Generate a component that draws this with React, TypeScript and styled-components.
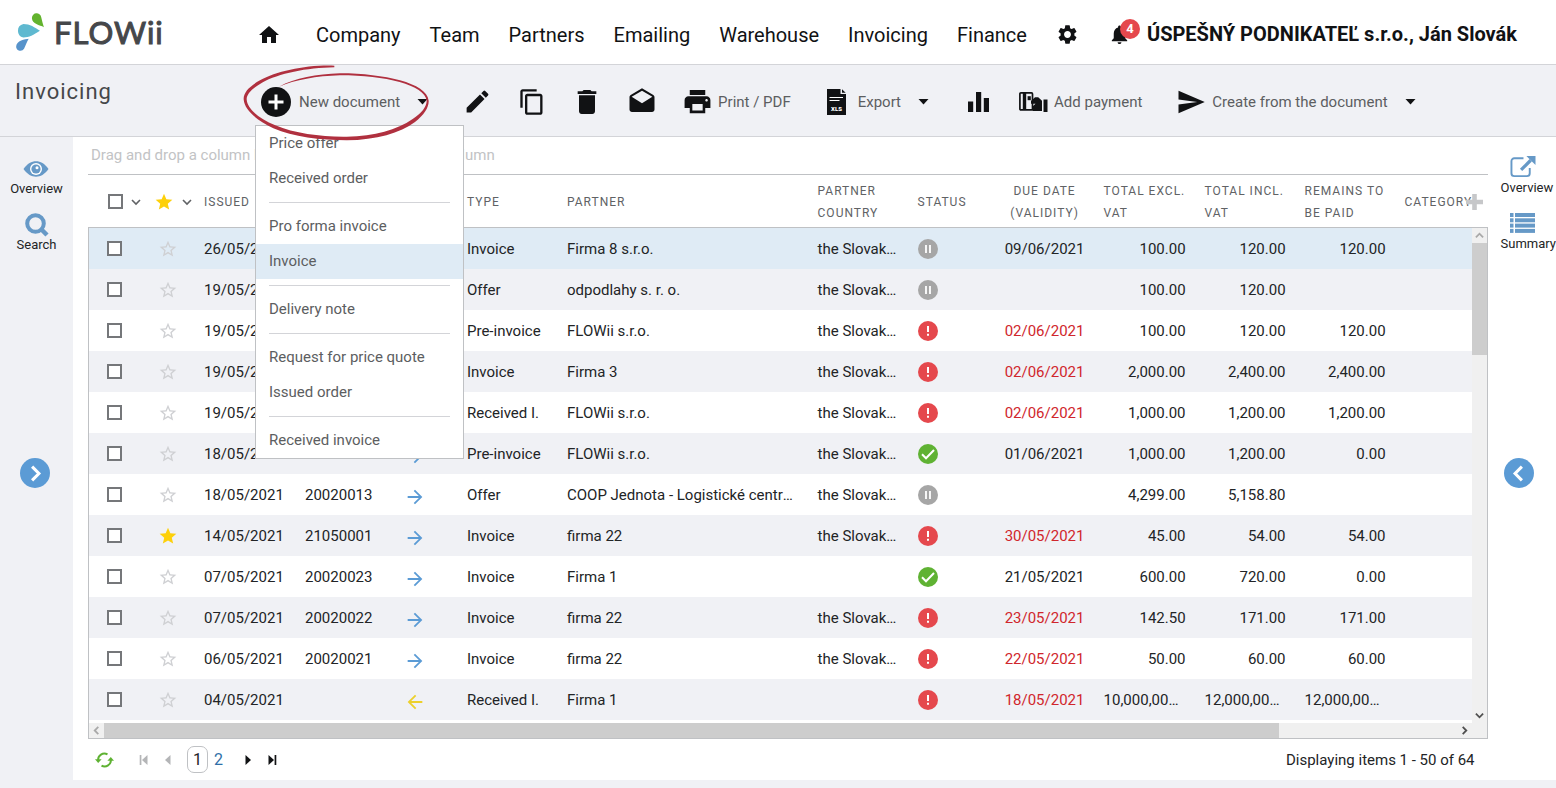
import React from 'react';
import styled, { createGlobalStyle, css } from 'styled-components';
import {
  MdHome,
  MdSettings,
  MdNotifications,
  MdEdit,
  MdContentCopy,
  MdDelete,
  MdDrafts,
  MdPrint,
  MdSend,
  MdStar,
  MdStarBorder,
  MdArrowForward,
  MdArrowBack,
} from 'react-icons/md';

const color = {
  ink: '#111214',
  text: '#222426',
  muted: '#5c5e61',
  page: '#f0f1f5',
  line: '#d3d4d8',
  frame: '#bfc1c4',
  select: '#dfebf5',
  blue: '#5b9bd5',
  steel: '#6699c7',
  red: '#e5484d',
  due: '#d0262c',
  green: '#5fb233',
  grey: '#a6a6a6',
  gold: '#fdd00a',
};

const GlobalStyle = createGlobalStyle`
  *, *::before, *::after { box-sizing: border-box; }
  body {
    margin: 0;
    background: ${color.page};
    color: ${color.text};
    font-family: Roboto, "Liberation Sans", sans-serif;
    font-size: 15px;
  }
  button {
    font: inherit;
    color: inherit;
    background: none;
    border: 0;
    padding: 0;
    cursor: pointer;
  }
  a { color: inherit; text-decoration: none; }
  svg { display: block; flex: none; }
`;

const Page = styled.div`
  display: flex;
  flex-direction: column;
  min-height: 100vh;
`;

/* ---------- top navigation ---------- */

const Header = styled.header`
  display: flex;
  align-items: center;
  height: 65px;
  padding-left: 15px;
  background: #fff;
  border-bottom: 1px solid ${color.line};
`;

const Logo = styled.a`
  display: flex;
  align-items: center;
  gap: 9px;
  flex: 0 0 242px;
  height: 60px;
  color: #45474a;
  font-family: Lato, Roboto, sans-serif;
  font-size: 31px;
  letter-spacing: 1px;
  -webkit-text-stroke: 1px #45474a;
`;

const Nav = styled.nav`
  display: flex;
  align-items: center;
  gap: 29px;
  padding-top: 5px;
  color: ${color.ink};
  font-size: 20px;
  line-height: 24px;
  white-space: nowrap;
`;

const HomeLink = styled.a`
  margin-right: 6px;
`;

const Account = styled.div`
  display: flex;
  align-items: center;
  gap: 16px;
  margin-left: 29px;
  padding-top: 4px;
  color: ${color.ink};
  font-size: 20px;
  line-height: 24px;
  font-weight: 700;
  white-space: nowrap;
`;

const Bell = styled.button`
  position: relative;
`;

const Count = styled.span`
  position: absolute;
  left: 12px;
  top: -4px;
  width: 20px;
  height: 20px;
  border-radius: 50%;
  background: ${color.red};
  color: #fff;
  font-size: 13px;
  line-height: 20px;
  font-weight: 700;
  text-align: center;
`;

/* ---------- toolbar ---------- */

const Toolbar = styled.div`
  display: flex;
  height: 72px;
  padding-left: 15px;
  background: ${color.page};
  border-bottom: 1px solid ${color.line};
`;

const Title = styled.h1`
  flex: 0 0 246px;
  margin: 0;
  padding-top: 14px;
  color: #45474a;
  font-size: 22px;
  line-height: 26px;
  font-weight: 400;
  letter-spacing: 1px;
`;

const Tools = styled.div`
  display: flex;
  align-items: center;
  gap: 29px;
  padding-top: 2px;
`;

const Tool = styled.button<{ $pad?: number }>`
  display: flex;
  align-items: center;
  gap: 8px;
  height: 30px;
  padding-right: ${(p) => p.$pad ?? 0}px;
  color: ${color.muted};
  line-height: 20px;
  white-space: nowrap;
`;

const ToolIcon = styled.span`
  display: flex;
  align-items: center;
  justify-content: center;
  width: 26px;
  color: ${color.ink};
`;

const CaretBox = styled.span`
  margin-left: 9px;
  color: ${color.ink};
`;

const MenuAnchor = styled.div`
  position: relative;
`;

const Menu = styled.ul`
  position: absolute;
  z-index: 2;
  left: -6px;
  top: 38px;
  width: 209px;
  margin: 0;
  padding: 0;
  list-style: none;
  background: #fff;
  border: 1px solid ${color.frame};
`;

const MenuItem = styled.button<{ $active?: boolean }>`
  display: block;
  width: 100%;
  padding: 0 13px;
  color: ${color.muted};
  background: ${(p) => (p.$active ? color.select : 'transparent')};
  line-height: 35px;
  text-align: left;
`;

const MenuLine = styled.li`
  height: 1px;
  margin: 6px 13px;
  background: ${color.line};
`;

const Marker = styled.svg`
  position: absolute;
  z-index: 3;
  left: -21px;
  top: -27px;
  pointer-events: none;
`;

/* ---------- body ---------- */

const Body = styled.div`
  display: flex;
  margin-bottom: 8px;
`;

const LeftRail = styled.aside`
  display: flex;
  flex-direction: column;
  align-items: center;
  flex: 0 0 73px;
  padding-top: 20px;
`;

const RightRail = styled.aside`
  display: flex;
  flex-direction: column;
  align-items: flex-start;
  flex: 0 0 67px;
  padding: 19px 0 0 13px;
  background: #fff;
`;

const RailItem = styled.button<{ $side: 'left' | 'right' }>`
  display: flex;
  flex-direction: column;
  align-items: ${(p) => (p.$side === 'left' ? 'center' : 'flex-start')};
  justify-content: flex-end;
  height: 40px;
  margin-bottom: 16px;
  color: ${color.text};
  font-size: 13px;
  line-height: 16px;
`;

const RailIcon = styled.span<{ $side: 'left' | 'right' }>`
  display: flex;
  align-items: center;
  justify-content: center;
  width: 26px;
  height: 24px;
  margin-left: ${(p) => (p.$side === 'left' ? 0 : 9)}px;
  margin-bottom: ${(p) => (p.$side === 'left' ? 0 : 2)}px;
`;

const RailToggle = styled.button<{ $side: 'left' | 'right' }>`
  display: flex;
  align-items: center;
  justify-content: center;
  width: 30px;
  height: 30px;
  margin-top: ${(p) => (p.$side === 'left' ? 189 : 190)}px;
  margin-right: ${(p) => (p.$side === 'left' ? 3 : 0)}px;
  margin-left: ${(p) => (p.$side === 'left' ? 0 : 3)}px;
  border-radius: 50%;
  background: ${color.blue};
  color: #fff;
`;

const Main = styled.main`
  flex: 1;
  min-width: 0;
  padding-left: 15px;
  background: #fff;
`;

const GroupBar = styled.div`
  height: 38px;
  padding: 0 3px;
  border-bottom: 1px solid ${color.frame};
  color: #c2c3c5;
  line-height: 36px;
`;

const HeadWrap = styled.div`
  position: relative;
  padding: 0 16px 0 1px;
`;

const AddColumn = styled.button`
  position: absolute;
  right: 5px;
  top: 19px;
`;

const Table = styled.table`
  width: 100%;
  table-layout: fixed;
  border-collapse: collapse;
`;

const BodyTable = styled(Table)`
  margin-bottom: 3px;
`;

const Th = styled.th<{ $align?: string }>`
  height: 52px;
  padding: 1px 0 0 9px;
  color: #606265;
  font-size: 12px;
  line-height: 22px;
  font-weight: 400;
  letter-spacing: 1px;
  text-transform: uppercase;
  text-align: ${(p) => p.$align ?? 'left'};
  ${(p) =>
    p.$align === 'center' &&
    css`
      padding: 1px 8px 0;
    `}
`;

const PickCell = styled.span`
  display: flex;
  align-items: center;
  gap: 8px;
  padding-left: 10px;
`;

const StarCell = styled.span`
  display: flex;
  align-items: center;
  gap: 8px;
  margin-left: -4px;
`;

const Frame = styled.div`
  display: grid;
  grid-template-columns: minmax(0, 1fr) 15px;
  border: 1px solid ${color.frame};
`;

const Row = styled.tr<{ $selected?: boolean }>`
  background: #fff;
  &:nth-child(even) {
    background: ${color.page};
  }
  ${(p) =>
    p.$selected &&
    css`
      background: ${color.select};
    `}
`;

const Td = styled.td<{ $align?: string; $late?: boolean }>`
  height: 41px;
  padding: 0 9px;
  overflow: hidden;
  color: ${(p) => (p.$late ? color.due : color.text)};
  line-height: 20px;
  text-align: ${(p) => p.$align ?? 'left'};
  text-overflow: ellipsis;
  white-space: nowrap;
`;

const Amount = styled(Td)`
  padding-right: 10px;
`;

const Direction = styled.span`
  display: block;
  padding-top: 5px;
`;

const Check = styled.input`
  appearance: none;
  display: block;
  width: 15px;
  height: 15px;
  margin: 0 0 0 9px;
  border: 2px solid #75777a;
  background: #fff;
  flex: none;
`;

const HeadCheck = styled(Check)`
  margin: 0;
`;

const VScroll = styled.div`
  display: flex;
  flex-direction: column;
  background: #f0f0f0;
`;

const VThumb = styled.div`
  height: 112px;
  background: #cdcdcd;
`;

const HScroll = styled.div`
  display: flex;
  height: 15px;
  background: #f0f0f0;
`;

const HThumb = styled.div`
  flex: 0 1 85%;
  background: #cdcdcd;
`;

const ScrollButton = styled.button<{ $end?: boolean }>`
  display: flex;
  align-items: center;
  justify-content: center;
  flex: 0 0 15px;
  min-width: 15px;
  height: 15px;
  color: ${(p) => (p.$end ? '#505050' : '#a9a9a9')};
  ${(p) =>
    p.$end &&
    css`
      margin-top: auto;
      margin-left: auto;
    `}
`;

const Corner = styled.div`
  background: #f0f0f0;
`;

const Pager = styled.footer`
  display: flex;
  align-items: center;
  height: 41px;
  padding: 0 13px 0 7px;
`;

const PagerGroup = styled.div`
  display: flex;
  align-items: center;
  gap: 13px;
  margin-left: 25px;
`;

const Pages = styled.div`
  display: flex;
  align-items: center;
  gap: 6px;
  margin: 0 8px 0 2px;
`;

const PageLink = styled.a<{ $current?: boolean }>`
  color: #2f6fa8;
  ${(p) =>
    p.$current &&
    css`
      width: 21px;
      border: 1px solid ${color.frame};
      border-radius: 7px;
      color: ${color.text};
      text-align: center;
    `}
  font-size: 16px;
  line-height: 25px;
`;

const Summary = styled.span`
  margin-left: auto;
`;

/* ---------- drawings ---------- */

const Caret = () => (
  <svg width="11" height="6" viewBox="0 0 11 6" fill="currentColor">
    <path d="M0.5 0h10L5.5 5.6z" />
  </svg>
);

const chevrons = {
  down: 'M1 3l4 4 4-4',
  up: 'M1 7l4-4 4 4',
  left: 'M7 1L3 5l4 4',
  right: 'M3 1l4 4-4 4',
};

interface ChevronProps {
  to: keyof typeof chevrons;
  size?: number;
  weight?: number;
}

const Chevron = ({ to, size = 10, weight = 1.6 }: ChevronProps) => (
  <svg width={size} height={size} viewBox="0 0 10 10" fill="none" stroke="currentColor" strokeWidth={weight}>
    <path d={chevrons[to]} />
  </svg>
);

const LogoMark = () => (
  <svg width="30" height="39" viewBox="45 33 90 118">
    <path fill="#63b32e" d="M132 76C120 70 96 66 96 50A14 14 0 0 1 124 46C126 56 129 66 132 76Z" />
    <path fill="#5fb9d0" d="M120 87C100 100 88 107 70 107A21 21 0 0 1 70 66C90 66 104 76 120 87Z" />
    <path fill="#5793cb" d="M86 111C76 112 48 116 48 136A13 13 0 0 0 72 141C77 132 80 120 86 111Z" />
  </svg>
);

const PlusDisc = () => (
  <svg width="30" height="30" viewBox="0 0 30 30">
    <circle cx="15" cy="15" r="15" fill={color.ink} />
    <path d="M15 7.500v15M7.500 15h15" stroke="#fff" strokeWidth="3" />
  </svg>
);

const XlsIcon = () => (
  <svg width="19" height="26" viewBox="0 0 19 26">
    <path d="M0 0h13.500v5H19V26H0z" fill={color.ink} />
    <path d="M15 0.300l3.700 3.500H15z" fill={color.ink} />
    <path d="M2.500 8.500h13.500M2.500 11.500h10" stroke="#fff" strokeWidth="1.200" />
    <text x="9.500" y="21.500" fill="#fff" fontFamily="Roboto, sans-serif" fontSize="6" fontWeight="900" textAnchor="middle">
      XLS
    </text>
  </svg>
);

const ChartIcon = () => (
  <svg width="21" height="20" viewBox="0 0 21 20" fill={color.ink}>
    <path d="M0 9.500h5.200V20H0zM8 0h5.200v20H8zM15.800 6h5.200v14h-5.200z" />
  </svg>
);

const PaymentIcon = () => (
  <svg width="29" height="20" viewBox="0 0 29 20" fill={color.ink}>
    <rect x="0.900" y="0.900" width="12.600" height="17" rx="1" fill="none" stroke={color.ink} strokeWidth="1.700" />
    <path d="M3.800 1h3.400v17H3.800z" />
    <path d="M8.600 4.200h3.200v4H8.600z" />
    <path d="M12 9l4-3.800h3.200L23 8.800V19h-9.500v-4.500l3-2.700H12z" />
    <path d="M24.500 7.500h4V20h-4z" />
  </svg>
);

const EyeIcon = () => (
  <svg width="26" height="16" viewBox="0 0 26 16">
    <path d="M0.500 8C4.500 2.500 8.500 0.300 13 0.300S21.500 2.500 25.500 8C21.500 13.500 17.500 15.700 13 15.700S4.500 13.500 0.500 8z" fill={color.steel} />
    <circle cx="13" cy="8" r="6" fill="#fff" />
    <circle cx="13" cy="8" r="4.600" fill={color.steel} />
    <circle cx="14" cy="6.800" r="1.500" fill="#fff" />
  </svg>
);

const SearchIcon = () => (
  <svg width="24" height="24" viewBox="0 0 24 24" fill="none" stroke={color.steel}>
    <circle cx="10.500" cy="10.500" r="8.300" strokeWidth="4" />
    <path d="M16.500 16.500L22 22" strokeWidth="4.500" />
  </svg>
);

const OpenIcon = () => (
  <svg width="26" height="23" viewBox="0 0 27 23" fill="none" stroke={color.steel}>
    <path d="M14 3H4.500A3 3 0 0 0 1.500 6V18.500A3 3 0 0 0 4.500 21.500H17.500A3 3 0 0 0 20.500 18.500V13" strokeWidth="2" />
    <path d="M11.500 15L21.500 5" strokeWidth="3.400" />
    <path d="M17 0.500H26.500V10z" fill={color.steel} stroke="none" />
  </svg>
);

const ListIcon = () => (
  <svg width="25" height="20" viewBox="0 0 25 20" fill={color.steel}>
    {[0, 5.3, 10.6, 15.9].map((y) => (
      <React.Fragment key={y}>
        <rect x="0" y={y} width="3.500" height="4" />
        <rect x="5" y={y} width="20" height="4" />
      </React.Fragment>
    ))}
  </svg>
);

const AddIcon = () => (
  <svg width="17" height="16" viewBox="0 0 17 16" fill="#c6c7c9">
    <path d="M6.200 0h4.600v5.700H17v4.600h-6.200V16H6.200v-5.700H0V5.700h6.200z" />
  </svg>
);

const RefreshIcon = () => (
  <svg width="19" height="16" viewBox="0 0 19 16" fill="none" stroke={color.green} strokeWidth="2">
    <path d="M3.200 8.500A6.200 6.200 0 0 1 12.500 2.400" />
    <path d="M15.800 7.500A6.200 6.200 0 0 1 6.500 13.600" />
    <path d="M0 7.300h6.600L3.200 11z" fill={color.green} stroke="none" />
    <path d="M12.400 8.700H19L15.800 5z" fill={color.green} stroke="none" />
  </svg>
);

const StepIcon = ({ back, edge }: { back?: boolean; edge?: boolean }) => (
  <svg width="10" height="10" viewBox="0 0 10 10" fill={back ? '#b4b5b7' : color.ink}>
    <g transform={back ? 'translate(10 0) scale(-1 1)' : undefined}>
      <path d="M1.500 0L7 5l-5.500 5z" />
      {edge && <path d="M7.600 0h1.700v10H7.600z" />}
    </g>
  </svg>
);

type Status = 'wait' | 'late' | 'done';

const StatusIcon = ({ status }: { status: Status }) => {
  const fill = { wait: color.grey, late: color.red, done: color.green }[status];
  return (
    <svg width="20" height="20" viewBox="0 0 20 20" role="img" aria-label={status}>
      <circle cx="10" cy="10" r="10" fill={fill} />
      {status === 'wait' && <path d="M8 6v8M12 6v8" stroke="#fff" strokeWidth="1.800" />}
      {status === 'late' && <path d="M10 5v6M10 12.800v2" stroke="#fff" strokeWidth="2" />}
      {status === 'done' && <path d="M4 10.300l4 4 8-8.300" stroke="#fff" strokeWidth="2" fill="none" />}
    </svg>
  );
};

const RedLoop = () => (
  <Marker width="200" height="90" viewBox="0 0 600 270" fill="#b0303f">
    <path d="M283 17C200 14 110 33 60 61C28 79 10 98 11 118C13 150 50 181 100 205C160 231 240 241 320 241C410 240 480 219 525 186C552 165 567 142 566 122C563 95 530 75 480 61C430 48 370 40 300 40C230 42 165 54 117 80C165 60 230 48 300 46C370 46 430 53 479 66C526 80 557 98 560 122C560 140 545 159 518 177C470 210 405 228 320 230C245 231 165 221 106 196C54 174 21 145 20 118C20 102 36 85 66 68C116 41 200 23 283 22Z" />
  </Marker>
);

/* ---------- data ---------- */

interface Doc {
  issued: string;
  number?: string;
  dir?: 'out' | 'in';
  star?: boolean;
  type: string;
  partner: string;
  country?: string;
  status: Status;
  due?: string;
  excl: string;
  incl: string;
  remains?: string;
}

const SK = 'the Slovak Republic';

const docs: Doc[] = [
  { issued: '26/05/2021', type: 'Invoice', partner: 'Firma 8 s.r.o.', country: SK, status: 'wait', due: '09/06/2021', excl: '100.00', incl: '120.00', remains: '120.00' },
  { issued: '19/05/2021', type: 'Offer', partner: 'odpodlahy s. r. o.', country: SK, status: 'wait', excl: '100.00', incl: '120.00' },
  { issued: '19/05/2021', type: 'Pre-invoice', partner: 'FLOWii s.r.o.', country: SK, status: 'late', due: '02/06/2021', excl: '100.00', incl: '120.00', remains: '120.00' },
  { issued: '19/05/2021', type: 'Invoice', partner: 'Firma 3', country: SK, status: 'late', due: '02/06/2021', excl: '2,000.00', incl: '2,400.00', remains: '2,400.00' },
  { issued: '19/05/2021', type: 'Received I.', partner: 'FLOWii s.r.o.', country: SK, status: 'late', due: '02/06/2021', excl: '1,000.00', incl: '1,200.00', remains: '1,200.00' },
  { issued: '18/05/2021', number: '20020006', dir: 'out', type: 'Pre-invoice', partner: 'FLOWii s.r.o.', country: SK, status: 'done', due: '01/06/2021', excl: '1,000.00', incl: '1,200.00', remains: '0.00' },
  { issued: '18/05/2021', number: '20020013', dir: 'out', type: 'Offer', partner: 'COOP Jednota - Logistické centrum', country: SK, status: 'wait', excl: '4,299.00', incl: '5,158.80' },
  { issued: '14/05/2021', number: '21050001', dir: 'out', star: true, type: 'Invoice', partner: 'firma 22', country: SK, status: 'late', due: '30/05/2021', excl: '45.00', incl: '54.00', remains: '54.00' },
  { issued: '07/05/2021', number: '20020023', dir: 'out', type: 'Invoice', partner: 'Firma 1', status: 'done', due: '21/05/2021', excl: '600.00', incl: '720.00', remains: '0.00' },
  { issued: '07/05/2021', number: '20020022', dir: 'out', type: 'Invoice', partner: 'firma 22', country: SK, status: 'late', due: '23/05/2021', excl: '142.50', incl: '171.00', remains: '171.00' },
  { issued: '06/05/2021', number: '20020021', dir: 'out', type: 'Invoice', partner: 'firma 22', country: SK, status: 'late', due: '22/05/2021', excl: '50.00', incl: '60.00', remains: '60.00' },
  { issued: '04/05/2021', dir: 'in', type: 'Received I.', partner: 'Firma 1', status: 'late', due: '18/05/2021', excl: '10,000,000.00', incl: '12,000,000.00', remains: '12,000,000.00' },
];

const navItems = ['Company', 'Team', 'Partners', 'Emailing', 'Warehouse', 'Invoicing', 'Finance'];

const menuGroups = [
  ['Price offer', 'Received order'],
  ['Pro forma invoice', 'Invoice'],
  ['Delivery note'],
  ['Request for price quote', 'Issued order'],
  ['Received invoice'],
];

const columnWidths = [60, 46, 101, 99, 63, 100, undefined, 100, 86, 100, 101, 100, 100, 76];

const Columns = () => (
  <colgroup>
    {columnWidths.map((width, i) => (
      <col key={i} width={width} />
    ))}
  </colgroup>
);

export default function App() {
  return (
    <Page>
      <GlobalStyle />
      <Header>
        <Logo href="#">
          <LogoMark />
          FLOWii
        </Logo>
        <Nav>
          <HomeLink href="#" aria-label="Home">
            <MdHome size={24} />
          </HomeLink>
          {navItems.map((item) => (
            <a href="#" key={item}>
              {item}
            </a>
          ))}
        </Nav>
        <Account>
          <a href="#" aria-label="Settings">
            <MdSettings size={23} />
          </a>
        </Account>
        <Account>
          <Bell aria-label="Notifications">
            <MdNotifications size={23} />
            <Count>4</Count>
          </Bell>
          <span>ÚSPEŠNÝ PODNIKATEĽ s.r.o., Ján Slovák</span>
        </Account>
      </Header>

      <Toolbar>
        <Title>Invoicing</Title>
        <Tools>
          <MenuAnchor>
            <Tool $pad={7}>
              <PlusDisc />
              New document
              <CaretBox>
                <Caret />
              </CaretBox>
            </Tool>
            <Menu>
              {menuGroups.map((group, i) => (
                <React.Fragment key={group[0]}>
                  {i > 0 && <MenuLine role="separator" />}
                  {group.map((label) => (
                    <li key={label}>
                      <MenuItem $active={label === 'Invoice'}>{label}</MenuItem>
                    </li>
                  ))}
                </React.Fragment>
              ))}
            </Menu>
            <RedLoop />
          </MenuAnchor>
          <Tool aria-label="Edit">
            <ToolIcon>
              <MdEdit size={29} />
            </ToolIcon>
          </Tool>
          <Tool aria-label="Copy">
            <ToolIcon>
              <MdContentCopy size={28} />
            </ToolIcon>
          </Tool>
          <Tool aria-label="Delete">
            <ToolIcon>
              <MdDelete size={32} />
            </ToolIcon>
          </Tool>
          <Tool aria-label="Send by e-mail">
            <ToolIcon>
              <MdDrafts size={30} />
            </ToolIcon>
          </Tool>
          <Tool $pad={4}>
            <ToolIcon>
              <MdPrint size={31} />
            </ToolIcon>
            Print / PDF
          </Tool>
          <Tool $pad={7}>
            <ToolIcon>
              <XlsIcon />
            </ToolIcon>
            Export
            <CaretBox>
              <Caret />
            </CaretBox>
          </Tool>
          <Tool aria-label="Statistics">
            <ToolIcon>
              <ChartIcon />
            </ToolIcon>
          </Tool>
          <Tool $pad={7}>
            <ToolIcon>
              <PaymentIcon />
            </ToolIcon>
            Add payment
          </Tool>
          <Tool>
            <ToolIcon>
              <MdSend size={30} />
            </ToolIcon>
            Create from the document
            <CaretBox>
              <Caret />
            </CaretBox>
          </Tool>
        </Tools>
      </Toolbar>

      <Body>
        <LeftRail>
          <RailItem $side="left">
            <RailIcon $side="left">
              <EyeIcon />
            </RailIcon>
            Overview
          </RailItem>
          <RailItem $side="left">
            <RailIcon $side="left">
              <SearchIcon />
            </RailIcon>
            Search
          </RailItem>
          <RailToggle $side="left" aria-label="Expand left panel">
            <Chevron to="right" size={17} weight={1.8} />
          </RailToggle>
        </LeftRail>

        <Main>
          <GroupBar>Drag and drop a column header here to group by that column</GroupBar>
          <HeadWrap>
            <Table>
              <Columns />
              <thead>
                <tr>
                  <Th>
                    <PickCell>
                      <HeadCheck type="checkbox" aria-label="Select all" />
                      <Chevron to="down" />
                    </PickCell>
                  </Th>
                  <Th>
                    <StarCell>
                      <MdStar size={20} color={color.gold} />
                      <Chevron to="down" />
                    </StarCell>
                  </Th>
                  <Th>Issued</Th>
                  <Th>Number</Th>
                  <Th />
                  <Th>Type</Th>
                  <Th>Partner</Th>
                  <Th>Partner country</Th>
                  <Th>Status</Th>
                  <Th $align="center">Due date (validity)</Th>
                  <Th>Total excl. VAT</Th>
                  <Th>Total incl. VAT</Th>
                  <Th>Remains to be paid</Th>
                  <Th>Category</Th>
                </tr>
              </thead>
            </Table>
            <AddColumn aria-label="Add column">
              <AddIcon />
            </AddColumn>
          </HeadWrap>
          <Frame>
            <BodyTable>
              <Columns />
              <tbody>
                {docs.map((doc, i) => (
                  <Row key={i} $selected={i === 0}>
                    <Td>
                      <Check type="checkbox" aria-label={`Select ${doc.issued} ${doc.partner}`} />
                    </Td>
                    <Td>
                      {doc.star ? <MdStar size={20} color={color.gold} /> : <MdStarBorder size={20} color="#cfd0d3" />}
                    </Td>
                    <Td>{doc.issued}</Td>
                    <Td>{doc.number}</Td>
                    <Td>
                      <Direction>
                        {doc.dir === 'out' && <MdArrowForward size={22} color={color.blue} />}
                        {doc.dir === 'in' && <MdArrowBack size={22} color="#ecd02c" />}
                      </Direction>
                    </Td>
                    <Td>{doc.type}</Td>
                    <Td>{doc.partner}</Td>
                    <Td>{doc.country}</Td>
                    <Td>
                      <StatusIcon status={doc.status} />
                    </Td>
                    <Td $align="center" $late={doc.status === 'late'}>
                      {doc.due}
                    </Td>
                    <Amount $align="right">{doc.excl}</Amount>
                    <Amount $align="right">{doc.incl}</Amount>
                    <Amount $align="right">{doc.remains}</Amount>
                    <Td />
                  </Row>
                ))}
              </tbody>
            </BodyTable>
            <VScroll>
              <ScrollButton aria-label="Scroll up">
                <Chevron to="up" size={9} weight={2} />
              </ScrollButton>
              <VThumb />
              <ScrollButton $end aria-label="Scroll down">
                <Chevron to="down" size={9} weight={2} />
              </ScrollButton>
            </VScroll>
            <HScroll>
              <ScrollButton aria-label="Scroll left">
                <Chevron to="left" size={9} weight={2} />
              </ScrollButton>
              <HThumb />
              <ScrollButton $end aria-label="Scroll right">
                <Chevron to="right" size={9} weight={2} />
              </ScrollButton>
            </HScroll>
            <Corner />
          </Frame>
          <Pager>
            <button aria-label="Refresh">
              <RefreshIcon />
            </button>
            <PagerGroup>
              <button aria-label="First page">
                <StepIcon back edge />
              </button>
              <button aria-label="Previous page">
                <StepIcon back />
              </button>
              <Pages>
                <PageLink href="#" $current>
                  1
                </PageLink>
                <PageLink href="#">2</PageLink>
              </Pages>
              <button aria-label="Next page">
                <StepIcon />
              </button>
              <button aria-label="Last page">
                <StepIcon edge />
              </button>
            </PagerGroup>
            <Summary>Displaying items 1 - 50 of 64</Summary>
          </Pager>
        </Main>

        <RightRail>
          <RailItem $side="right">
            <RailIcon $side="right">
              <OpenIcon />
            </RailIcon>
            Overview
          </RailItem>
          <RailItem $side="right">
            <RailIcon $side="right">
              <ListIcon />
            </RailIcon>
            Summary
          </RailItem>
          <RailToggle $side="right" aria-label="Expand right panel">
            <Chevron to="left" size={17} weight={1.8} />
          </RailToggle>
        </RightRail>
      </Body>
    </Page>
  );
}
